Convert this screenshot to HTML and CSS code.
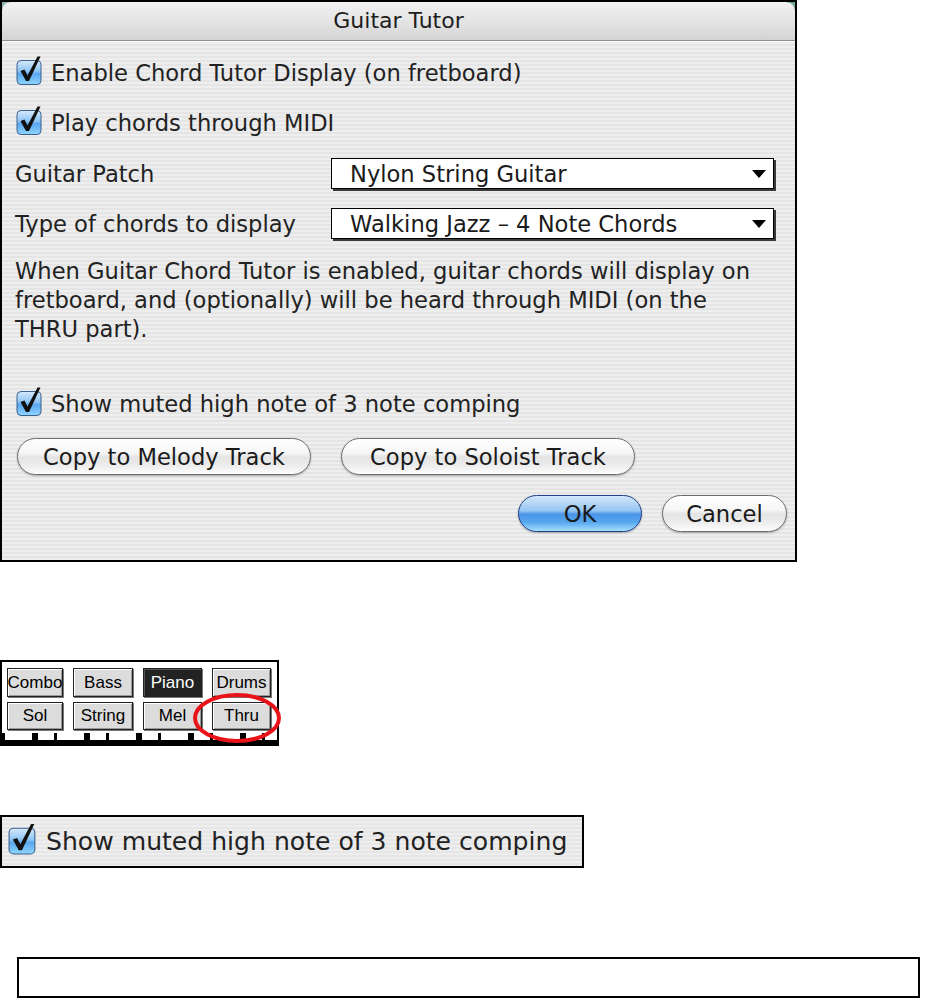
FILE: index.html
```html
<!doctype html>
<html>
    <head>
        <title>Guitar Tutor</title>
        <link rel="stylesheet" href="styles.css">
    </head>
    <body>
        <svg class="defs" width="0" height="0">
            <defs>
                <linearGradient id="aqua" x1="0" y1="0" x2="0" y2="1">
                    <stop offset="0" stop-color="#d6eafc"/>
                    <stop offset="0.45" stop-color="#8cc4f4"/>
                    <stop offset="0.55" stop-color="#5aa6ee"/>
                    <stop offset="1" stop-color="#8fd6ff"/>
                </linearGradient>
                <symbol id="checkbox" viewBox="0 0 27 30">
                    <rect x="1" y="4.5" width="24" height="24" rx="4" fill="url(#aqua)" stroke="#3d5f8c"/>
                    <polygon points="4.5,15 8.5,13.5 11.5,19.5 21.5,0.5 24.5,0.5 13,25 10,25" fill="#111"/>
                </symbol>
            </defs>
        </svg>

        <div class="dialog">
            <div class="titlebar">Guitar Tutor</div>
            <div class="content">
                <div class="check-row first">
                    <svg class="cb"><use href="#checkbox"/></svg>
                    <span>Enable Chord Tutor Display (on fretboard)</span>
                </div>
                <div class="check-row second">
                    <svg class="cb"><use href="#checkbox"/></svg>
                    <span>Play chords through MIDI</span>
                </div>
                <div class="field-row patch">
                    <span>Guitar Patch</span>
                    <div class="popup">
                        <span>Nylon String Guitar</span>
                        <svg class="arrow" width="14" height="8" viewBox="0 0 14 8"><polygon points="0,0 14,0 7,8" fill="#000"/></svg>
                    </div>
                </div>
                <div class="field-row kind">
                    <span>Type of chords to display</span>
                    <div class="popup">
                        <span>Walking Jazz &ndash; 4 Note Chords</span>
                        <svg class="arrow" width="14" height="8" viewBox="0 0 14 8"><polygon points="0,0 14,0 7,8" fill="#000"/></svg>
                    </div>
                </div>
                <p class="note">When Guitar Chord Tutor is enabled, guitar chords will display on<br>fretboard, and (optionally) will be heard through MIDI (on the<br>THRU part).</p>
                <div class="check-row muted">
                    <svg class="cb"><use href="#checkbox"/></svg>
                    <span>Show muted high note of 3 note comping</span>
                </div>
                <div class="button-row">
                    <button type="button" class="pill wide">Copy to Melody Track</button>
                    <button type="button" class="pill wide">Copy to Soloist Track</button>
                </div>
                <div class="confirm-row">
                    <button type="button" class="pill pill_default">OK</button>
                    <button type="button" class="pill">Cancel</button>
                </div>
            </div>
        </div>

        <div class="mixer">
            <div class="mix-grid">
                <span class="mbtn">Combo</span>
                <span class="mbtn">Bass</span>
                <span class="mbtn mbtn_on">Piano</span>
                <span class="mbtn">Drums</span>
                <span class="mbtn">Sol</span>
                <span class="mbtn">String</span>
                <span class="mbtn">Mel</span>
                <span class="mbtn">Thru</span>
            </div>
            <div class="keys"></div>
            <svg class="ring" width="96" height="56" viewBox="0 0 96 56"><ellipse cx="47" cy="27" rx="42" ry="23" fill="none" stroke="#e8141a" stroke-width="4"/></svg>
        </div>

        <div class="sample">
            <svg class="cb big"><use href="#checkbox"/></svg>
            <span>Show muted high note of 3 note comping</span>
        </div>

        <div class="blank"></div>
    </body>
</html>
```

FILE: styles.css
```css
body {
  margin: 0;
  background: #fff;
  color: #222;
  font: 22.6px "DejaVu Sans", sans-serif;
}

.defs {
  position: absolute;
}

/* Dialog */
.dialog {
  position: relative;
  width: 797px;
  height: 562px;
  box-sizing: border-box;
  border: 2px solid #000;
  background: repeating-linear-gradient(#eeeeee 0, #eeeeee 2px, #e5e5e5 2px, #e5e5e5 4px);
}

.titlebar {
  height: 38px;
  line-height: 38px;
  text-align: center;
  font-size: 22px;
  color: #1e1e1e;
  background: linear-gradient(#f1f1f1, #e2e2e2 60%, #d3d3d3);
  border-bottom: 1px solid #8e8e8e;
  box-shadow: 0 1px 0 #fafafa;
}

.titlebar::before,
.titlebar::after {
  content: "";
  position: absolute;
  top: 0;
  width: 8px;
  height: 8px;
}
.titlebar::before {
  left: 0;
  background: radial-gradient(circle at 100% 100%, transparent 7px, #8fb8b2 8px);
}
.titlebar::after {
  right: 0;
  background: radial-gradient(circle at 0 100%, transparent 7px, #6fa69c 8px);
}

.content {
  padding: 0 8px 0 13px;
}

.check-row {
  display: flex;
  align-items: center;
  gap: 8px;
  height: 30px;
  padding-left: 1px;
}
.check-row.first {
  margin-top: 17px;
}
.check-row.second {
  margin-top: 20px;
}
.check-row.muted {
  margin-top: 45px;
}

.cb {
  width: 27px;
  height: 30px;
  flex: none;
  margin-top: -4px;
}

.field-row {
  display: grid;
  grid-template-columns: 316px 443px;
  align-items: center;
  height: 33px;
}
.field-row.patch {
  margin-top: 19px;
}
.field-row.kind {
  margin-top: 17px;
}

.popup {
  display: flex;
  align-items: center;
  height: 31px;
  box-sizing: border-box;
  padding: 0 7px 0 18px;
  background: #fff;
  border: 1px solid #000;
  box-shadow: 2px 2px 0 #3a3a3a;
  color: #1a1a1a;
}
.popup .arrow {
  margin-left: auto;
}

.note {
  margin: 17px 0 0;
  line-height: 29px;
}

.button-row {
  display: flex;
  gap: 30px;
  margin: 19px 0 0 2px;
}

.confirm-row {
  display: flex;
  justify-content: flex-end;
  gap: 20px;
  margin-top: 20px;
}

.pill {
  height: 37px;
  width: 125px;
  padding: 0;
  border: 1px solid #6c6c6c;
  border-radius: 19px;
  font: inherit;
  color: #1a1a1a;
  background: linear-gradient(#ffffff 0%, #f6f6f6 40%, #e4e4e4 52%, #ececec 75%, #fdfdfd 100%);
  box-shadow: 0 1px 2px rgba(0, 0, 0, 0.3);
}
.pill.wide {
  width: 294px;
}
.pill_default {
  width: 124px;
  border-color: #243f88;
  background: linear-gradient(#d2e7fb 0%, #96c6f2 42%, #4b95e6 52%, #57a7ef 75%, #a6e0ff 100%);
}

/* Mixer buttons */
.mixer {
  position: relative;
  width: 279px;
  height: 86px;
  box-sizing: border-box;
  margin-top: 98px;
  border: 2px solid #000;
  background: #fff;
}

.mix-grid {
  display: grid;
  grid-template-columns: 56px 60px 59px 59px;
  grid-template-rows: 29px 28px;
  column-gap: 10px;
  row-gap: 5px;
  padding: 6px 0 0 5px;
}

.mbtn {
  display: flex;
  align-items: center;
  justify-content: center;
  font: 17px "Liberation Sans", Arial, sans-serif;
  color: #000;
  background: #dcdcdc;
  border: 1px solid #222;
  box-shadow: inset 1px 1px 0 #fff, inset -1px -1px 0 #9a9a9a, 1px 1px 0 #777;
}
.mbtn_on {
  color: #fff;
  background: #222;
  box-shadow: inset 1px 1px 0 #555, 1px 1px 0 #777;
}

.keys {
  margin-top: 3px;
  height: 11px;
  background:
    linear-gradient(#000, #000) bottom / 100% 4px no-repeat,
    repeating-linear-gradient(90deg, #000 0, #000 3px, #fff 3px, #fff 30px, #000 30px, #000 36px, #fff 36px, #fff 52px);
}

.ring {
  position: absolute;
  left: 188px;
  top: 29px;
}

/* Single checkbox sample */
.sample {
  display: flex;
  align-items: center;
  gap: 9px;
  width: 584px;
  height: 53px;
  box-sizing: border-box;
  margin-top: 69px;
  padding-left: 6px;
  border: 2px solid #000;
  font-size: 25.1px;
  background: repeating-linear-gradient(#eeeeee 0, #eeeeee 2px, #e6e6e6 2px, #e6e6e6 4px);
}
.cb.big {
  width: 29px;
  height: 33px;
}

.blank {
  width: 903px;
  height: 41px;
  box-sizing: border-box;
  margin: 89px 0 0 17px;
  border: 2px solid #000;
}
```
